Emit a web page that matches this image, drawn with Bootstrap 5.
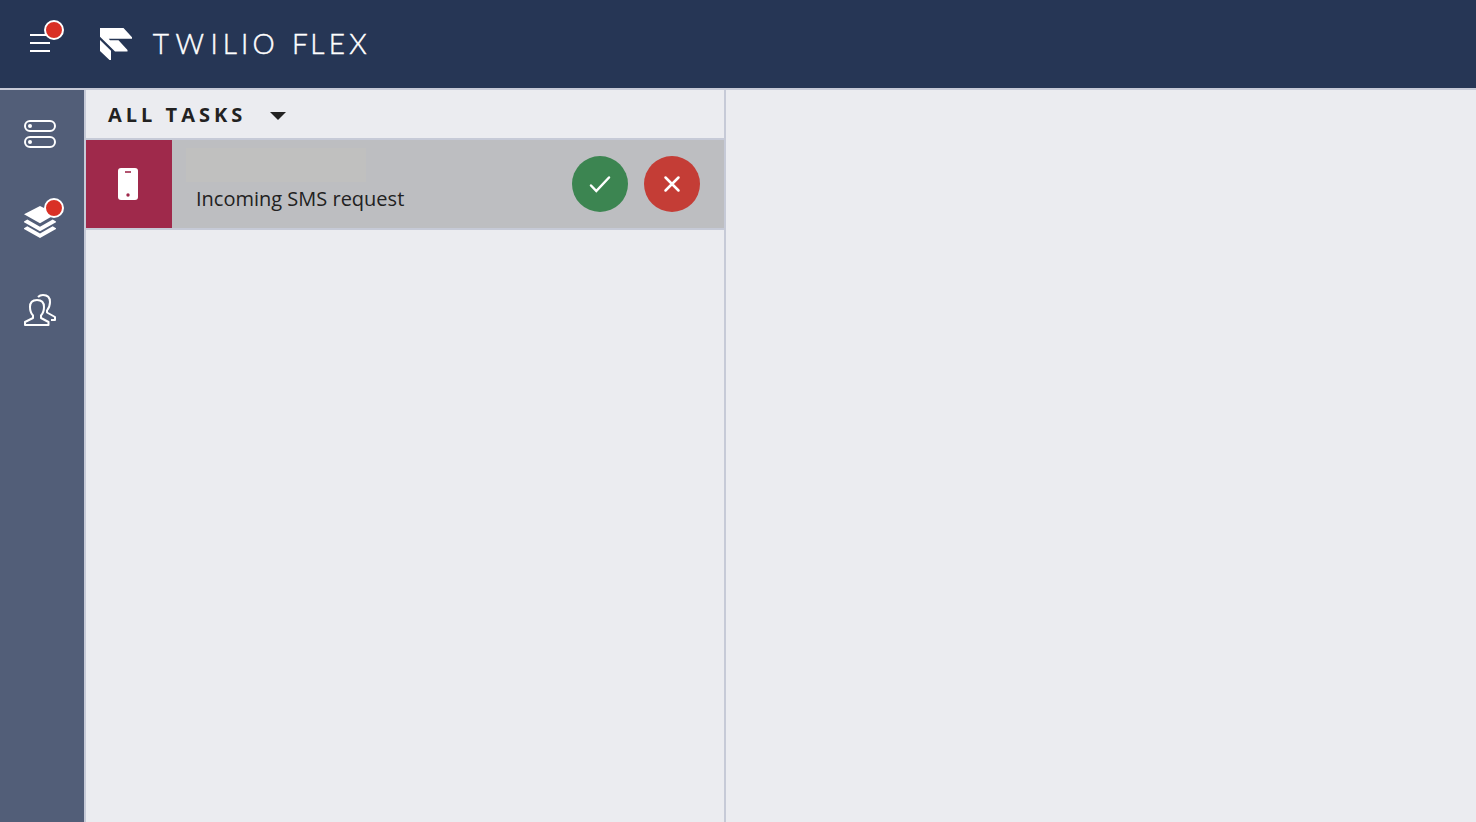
<!DOCTYPE html>
<html lang="en">
<head>
<meta charset="utf-8">
<meta name="viewport" content="width=device-width, initial-scale=1">
<title>Twilio Flex</title>
<link href="https://cdn.jsdelivr.net/npm/bootstrap@5.3.0/dist/css/bootstrap.min.css" rel="stylesheet">
<style>
:root{--line:#c6cad7}
body{font-family:"Open Sans",sans-serif;background:#ebecf0;color:#222}
svg{display:block;flex:none}
.topbar{height:90px;background:#263655;border-bottom:2px solid var(--line);padding-left:20px}
.icon-btn{width:40px;height:40px;color:#fff;border:0;background:none;padding:0}
.dot{position:absolute;left:24px;top:-4px;width:20px;height:20px;border:2px solid #fff;border-radius:50%;background:#d93025}
.brand{margin-left:40px}
.brand text{font-family:Lato,sans-serif;font-weight:300;font-size:28px;stroke:#fff;stroke-width:.45px}
.sidebar{width:86px;background:#525e78;border-right:2px solid var(--line);padding:24px 0 0 20px;gap:48px}
.task-panel{width:640px;border-right:2px solid var(--line)}
.filter{height:50px;border:0;border-bottom:2px solid var(--line);background:none;padding:2px 0 0 22px;font-size:20px;font-weight:700;color:#222}
.filter-label{letter-spacing:4px;width:162px;white-space:nowrap}
.caret{margin-top:2px}
.task{height:90px;background:#bdbec1;border-bottom:2px solid var(--line);padding-right:24px}
.channel{width:86px;background:#9f294b;padding-right:2px}
.task-name{width:180px;height:34px;background:#c0c0bf;margin:8px 0 0 14px}
.task-text{font-size:20px;line-height:28px;margin:3px 0 0 24px}
.round{width:56px;height:56px;border:0;border-radius:50%;padding:0}
.accept{background:#3c8551}
.reject{background:#c43d36}
</style>
</head>
<body>
<div class="vh-100 d-flex flex-column overflow-hidden">
  <header class="topbar d-flex align-items-center flex-shrink-0">
    <button class="icon-btn position-relative" aria-label="Menu">
      <svg width="40" height="40" stroke="#fff" stroke-width="2"><path d="M10 11h20M10 19h20M10 27h20"/></svg>
      <span class="dot"></span>
    </button>
    <svg class="brand" width="280" height="40" viewBox="100 24 280 40" fill="#fff">
      <path d="M100 28h23.500l8.500 9.300v1.500H108.800l1.200 1.500h8.500l9 9.700v1.500H115L100 36.700zM100 40l11 10.700V60h-1.500l-9.500-9z"/>
      <text y="54" x="152.800 175.600 210.400 222.700 241 252.500 292 310.300 328.800 349.200">TWILIOFLEX</text>
    </svg>
  </header>
  <div class="d-flex flex-grow-1">
    <nav class="sidebar d-flex flex-column flex-shrink-0">
      <button class="icon-btn" aria-label="Queues">
        <svg width="40" height="40" fill="none" stroke="#fff" stroke-width="2"><rect x="5" y="7" width="30" height="10" rx="5"/><rect x="5" y="23" width="30" height="10" rx="5"/><g fill="#fff" stroke="none"><circle cx="10" cy="12" r="2"/><circle cx="10" cy="28" r="2"/></g></svg>
      </button>
      <button class="icon-btn position-relative" aria-label="Tasks">
        <svg width="40" height="40" fill="#fff"><path d="M20 4l16 8-16 9.300L4 12.300zM4 19.500l3.300-2L20 24.800l12.700-7.300 3.300 2v.8l-16 9-16-9zM4 26.300l3.300-2L20 31.500l12.700-7.200 3.300 2v.8L20 36 4 27z"/></svg>
        <span class="dot"></span>
      </button>
      <button class="icon-btn" aria-label="Teams">
        <svg width="40" height="40" fill="none" stroke="#fff" stroke-width="2" stroke-linejoin="round"><path d="M5 35v-3l8-4v-2.500C11 23.500 10 20 10 17c0-4.500 2.500-7 7-7s7 2.500 7 7c0 3-1 6.500-3 8.500V28l7.500 4v3z"/><path d="M18 7c1.500-1.500 3-2 5-2 4.500 0 7 2.500 7 7 0 3-1 6-3 8.500v2l8 4.500v3h-4"/></svg>
      </button>
    </nav>
    <section class="task-panel d-flex flex-column flex-shrink-0">
      <button class="filter d-flex align-items-center text-start">
        <span class="filter-label">ALL TASKS</span>
        <svg class="caret" width="16" height="8" fill="#222"><path d="M0 0h16l-8 8z"/></svg>
      </button>
      <article class="task d-flex">
        <div class="channel d-flex align-items-center justify-content-center">
          <svg width="20" height="32"><rect width="20" height="32" rx="3" fill="#fff"/><path d="M7 4h6" stroke="#9f294b" stroke-width="1.600"/><circle cx="10" cy="27" r="1.700" fill="#9f294b"/></svg>
        </div>
        <div class="flex-grow-1">
          <div class="task-name"></div>
          <div class="task-text">Incoming SMS request</div>
        </div>
        <div class="d-flex align-items-center gap-3">
          <button class="round accept" aria-label="Accept"><svg width="56" height="56" fill="none" stroke="#fff" stroke-width="2.500" stroke-linecap="round"><path d="M19 29.500l5.300 5.500L37 21.500"/></svg></button>
          <button class="round reject" aria-label="Reject"><svg width="56" height="56" stroke="#fff" stroke-width="2.500" stroke-linecap="round"><path d="M21.500 21.500l13 13m0-13l-13 13"/></svg></button>
        </div>
      </article>
    </section>
    <main class="flex-grow-1"></main>
  </div>
</div>
<script src="https://cdn.jsdelivr.net/npm/bootstrap@5.3.0/dist/js/bootstrap.bundle.min.js"></script>
</body>
</html>
